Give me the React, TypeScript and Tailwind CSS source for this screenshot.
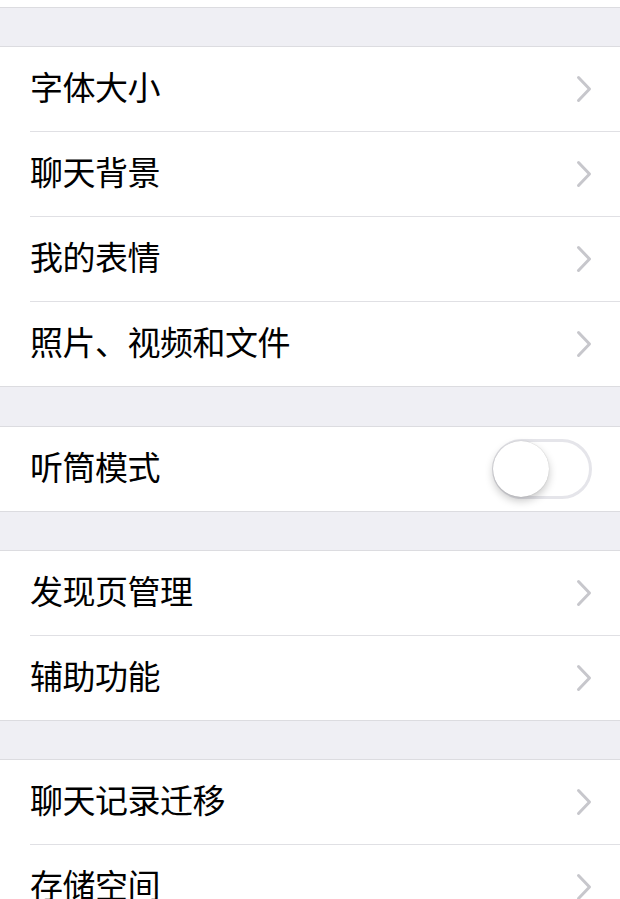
type Row = { label: string; toggle?: boolean }

const groups: Row[][] = [
  [
    { label: '字体大小' },
    { label: '聊天背景' },
    { label: '我的表情' },
    { label: '照片、视频和文件' },
  ],
  [{ label: '听筒模式', toggle: true }],
  [{ label: '发现页管理' }, { label: '辅助功能' }],
  [{ label: '聊天记录迁移' }, { label: '存储空间' }],
]

function Toggle() {
  return (
    <div className="relative h-[60px] w-[100px] rounded-full border-[3px] border-[#e5e5ea] bg-white">
      <span className="absolute -left-[2px] -top-[1px] h-[56px] w-[56px] rounded-full bg-white shadow-[0_4px_8px_rgba(0,0,0,0.22),0_0_1px_rgba(0,0,0,0.25)]" />
    </div>
  )
}

function Chevron() {
  return (
    <svg width="16" height="28" viewBox="0 0 16 28" className="shrink-0">
      <polyline
        points="2.5,2.5 13.5,14 2.5,25.5"
        fill="none"
        stroke="#c7c7cc"
        strokeWidth="3"
        strokeLinecap="round"
        strokeLinejoin="round"
      />
    </svg>
  )
}

export default function App() {
  return (
    <div className="min-h-screen bg-white pt-[7px] font-['Noto_Sans_CJK_SC',sans-serif] text-black">
      {groups.map((rows, gi) => (
        <div key={gi}>
          <div
            className={
              gi === 1
                ? 'h-[41px] border-y border-[#dcdce0] bg-[#efeff4]'
                : 'h-[40px] border-y border-[#dcdce0] bg-[#efeff4]'
            }
          />
          <div className="bg-white">
            {rows.map((r, i) => (
              <div key={r.label} className="pl-[30px]">
                {i > 0 && <div className="h-px bg-[#e0e0e4]" />}
                <div className="flex h-[84px] items-center justify-between pr-[28px]">
                  <span className="mb-[6px] text-[33px] leading-none tracking-[-0.5px]">{r.label}</span>
                  {r.toggle ? <Toggle /> : <Chevron />}
                </div>
              </div>
            ))}
          </div>
        </div>
      ))}
    </div>
  )
}
